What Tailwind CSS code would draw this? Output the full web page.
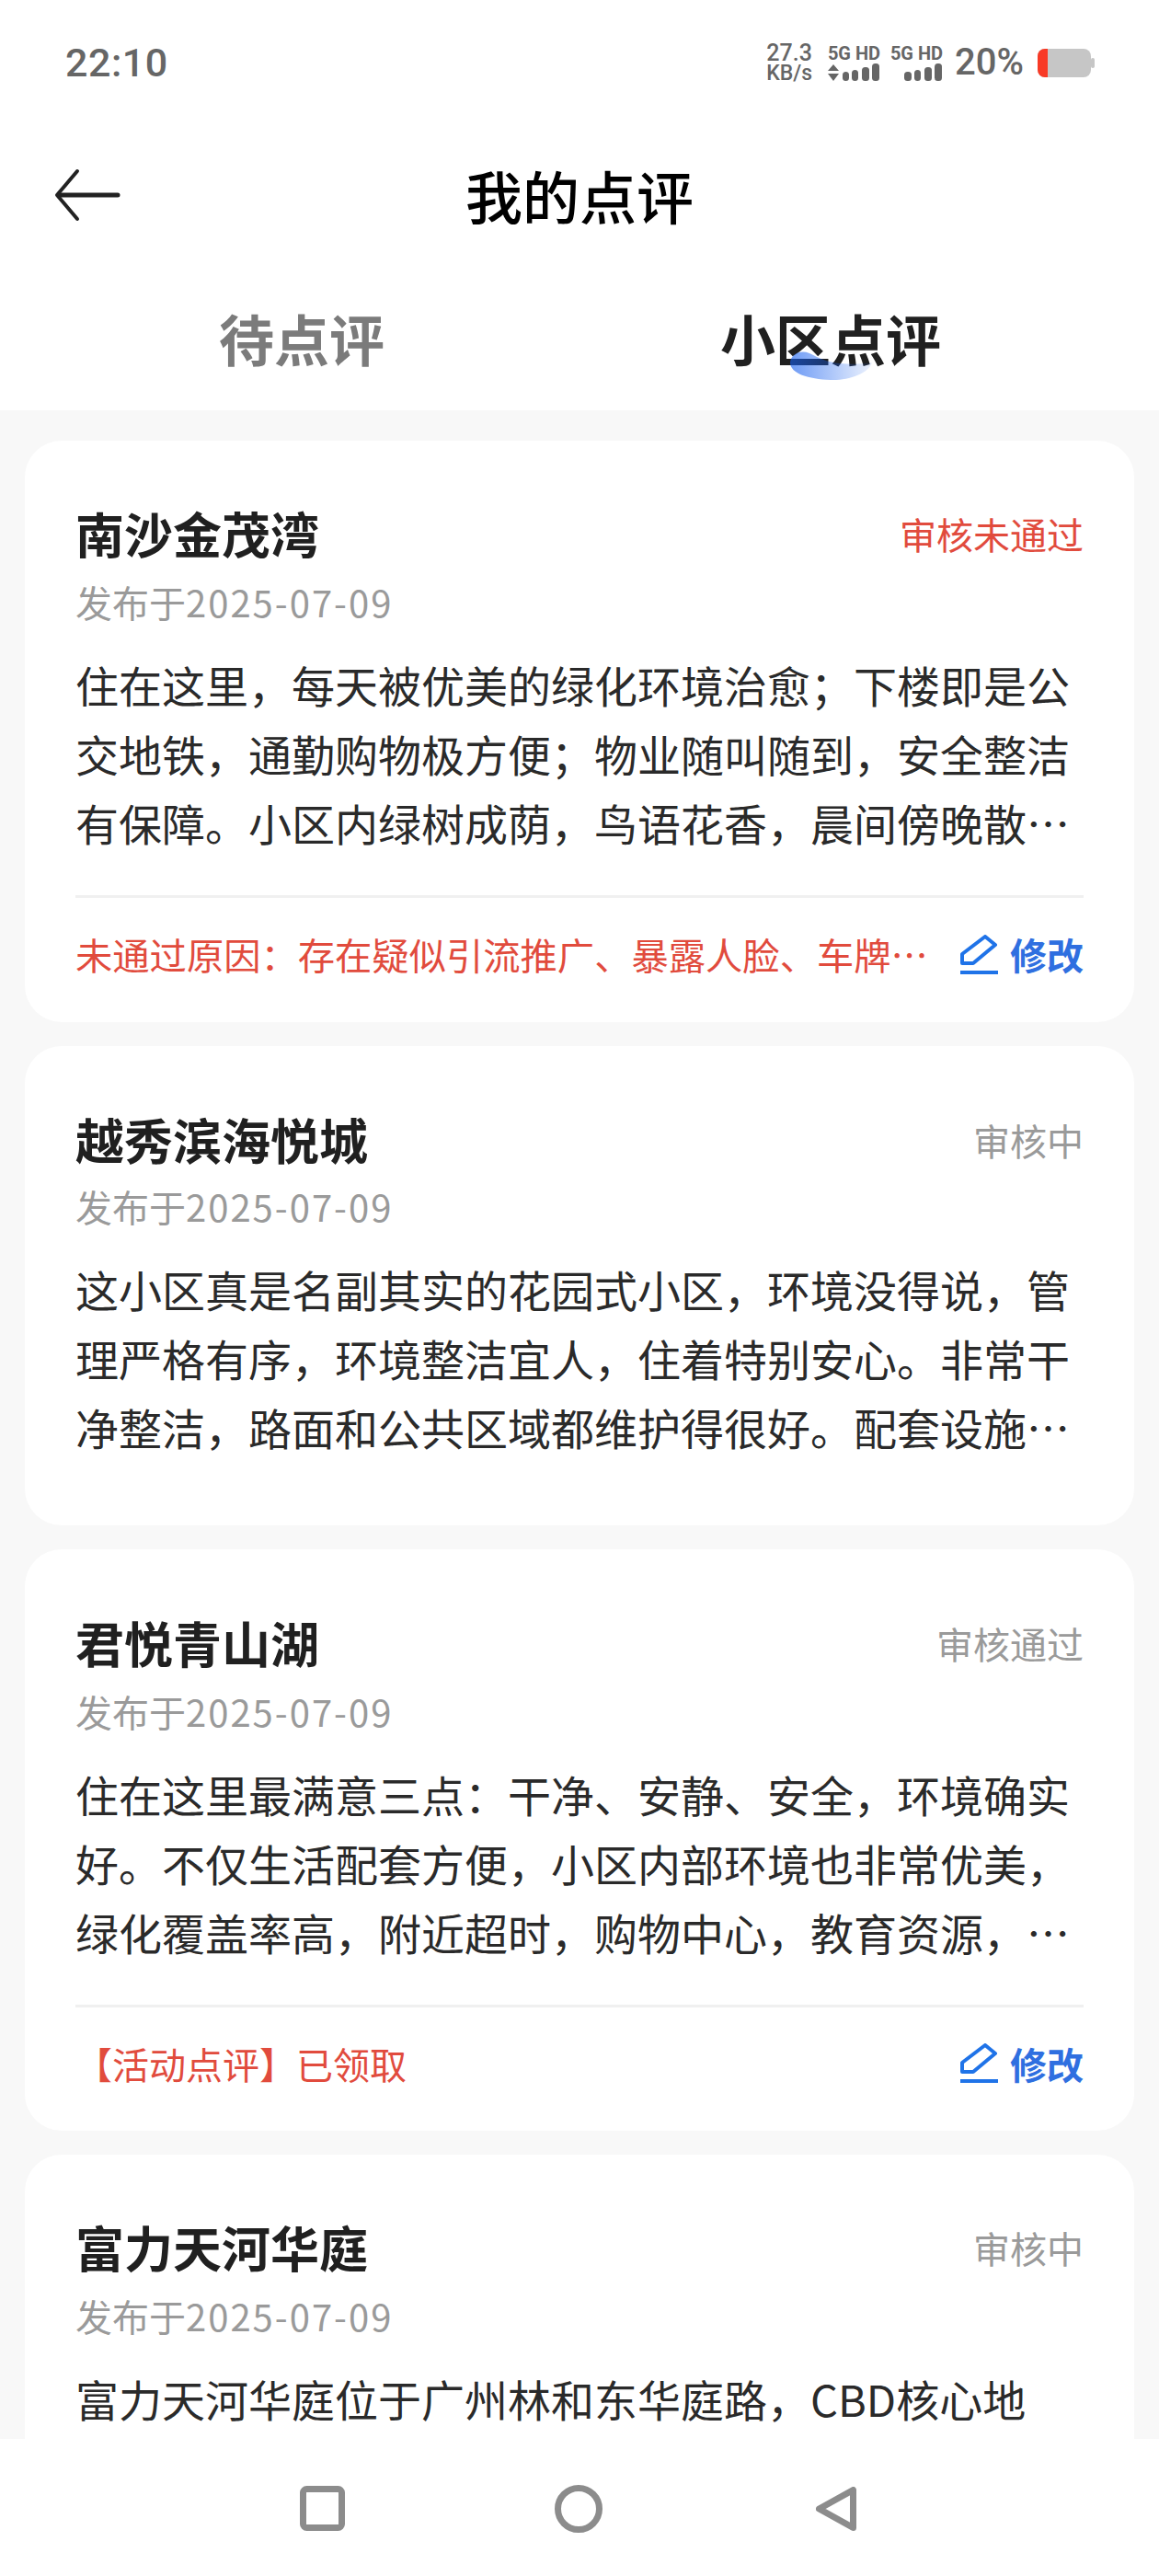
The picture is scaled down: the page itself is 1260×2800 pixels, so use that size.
<!DOCTYPE html>
<html lang="zh-CN">

<head>
    <meta charset="UTF-8">
    <meta name="viewport" content="width=device-width, initial-scale=1.0">
    <title>我的点评</title>
    <script src="https://cdn.jsdelivr.net/npm/@tailwindcss/browser@4"></script>
</head>

<body class="bg-white font-['Noto_Sans_CJK_SC','Noto_Sans',sans-serif]">
    <div class="w-[1260px] h-[2800px] flex flex-col overflow-hidden">
        <!-- status bar -->
        <div class="h-[136px] shrink-0 flex items-center justify-between pl-[71px] pr-[70px] text-[#666666] font-['Roboto',sans-serif]">
            <span class="text-[43px] font-medium tracking-[0.5px]">22:10</span>
            <div class="flex items-center">
                <div class="flex flex-col items-center w-[50px] mr-[17px] font-medium">
                    <span class="text-[25px] leading-[23px]">27.3</span>
                    <span class="text-[23px] leading-[21px]">KB/s</span>
                </div>
                <div class="flex flex-col items-end w-[57px] mr-[11px]">
                    <span class="text-[20px] leading-[21px] font-bold whitespace-nowrap">5G HD</span>
                    <svg width="57" height="20" viewBox="0 0 57 20" fill="#666666">
                        <path d="M0 8l6-7 6 7zM0 11h12l-6 8z" />
                        <rect x="16" y="9" width="7" height="10" rx="3.5" />
                        <rect x="26" y="7" width="7" height="12" rx="3.5" />
                        <rect x="37" y="4" width="8" height="15" rx="3.5" />
                        <rect x="48" y="0" width="8" height="19" rx="3.5" />
                    </svg>
                </div>
                <div class="flex flex-col items-end w-[57px] mr-[13px]">
                    <span class="text-[20px] leading-[21px] font-bold whitespace-nowrap">5G HD</span>
                    <svg width="57" height="20" viewBox="0 0 57 20" fill="#666666">
                        <rect x="15" y="9" width="8" height="10" rx="3.5" />
                        <rect x="26" y="7" width="7" height="12" rx="3.5" />
                        <rect x="37" y="4" width="8" height="15" rx="3.5" />
                        <rect x="48" y="0" width="8" height="19" rx="3.5" />
                    </svg>
                </div>
                <span class="text-[40px] font-medium mr-[15px]">20%</span>
                <svg width="62" height="31" viewBox="0 0 62 31">
                    <rect x="0" y="0" width="58" height="31" rx="8" fill="#c6c6c6" />
                    <path d="M8 0h3v31H8a8 8 0 0 1-8-8V8a8 8 0 0 1 8-8z" fill="#f83a26" />
                    <rect x="58" y="10" width="4" height="11" rx="2" fill="#c6c6c6" />
                </svg>
            </div>
        </div>

        <!-- title -->
        <div class="relative h-[156px] shrink-0 flex items-center justify-center pb-[4px]">
            <svg class="absolute left-[58px] top-[46px]" width="74" height="60" viewBox="0 0 74 60" fill="none" stroke="#222222" stroke-linecap="round" stroke-linejoin="round">
                <path d="M26 4L4 30l22 26" stroke-width="4" />
                <path d="M6 30h64" stroke-width="5" />
            </svg>
            <h1 class="text-[62px] font-medium text-black">我的点评</h1>
        </div>

        <!-- tabs -->
        <div class="h-[154px] shrink-0 grid grid-cols-2 pb-[4px] text-[60px] font-bold">
            <div class="flex items-center justify-center pl-[26px] text-[#7b7b7b]">待点评</div>
            <div class="flex items-center justify-center pr-[84px] text-[#202020]">
                <span class="relative">小区点评
                    <svg class="absolute left-[76px] top-[60px]" width="89" height="32" viewBox="0 0 89 32">
                        <defs>
                            <linearGradient id="tab-blob" x1="0" y1="0" x2="1" y2="0">
                                <stop offset="0" stop-color="#145def" stop-opacity="0.62" />
                                <stop offset="1" stop-color="#145def" stop-opacity="0.08" />
                            </linearGradient>
                        </defs>
                        <path d="M0 12C1 3 11-2 21 2c10 5 20 10 33 11 12 1 24 1 35-1C86 24 62 32 44 31 20 30 0 24 0 12z" fill="url(#tab-blob)" />
                    </svg>
                </span>
            </div>
        </div>

        <!-- list -->
        <div class="flex-1 overflow-hidden bg-[#f8f8f8] px-[27px] pt-[33px] flex flex-col gap-[26px]">
            <div class="bg-white rounded-[40px] px-[55px] pt-[66px] shrink-0">
                <div class="flex items-center justify-between h-[70px]">
                    <span class="text-[53px] font-bold text-[#202020]">南沙金茂湾</span>
                    <span class="text-[40px] text-[#e14b3d]">审核未通过</span>
                </div>
                <p class="text-[40px] leading-[56px] text-[#9a9a9a] mt-[11px]">发布于<span class="tracking-[2px]">2025-07-09</span></p>
                <p class="text-[47px] leading-[75px] text-[#2a2a2a] mt-[24px] line-clamp-3">住在这里，每天被优美的绿化环境治愈；下楼即是公交地铁，通勤购物极方便；物业随叫随到，安全整洁有保障。小区内绿树成荫，鸟语花香，晨间傍晚散步都很惬意，邻里之间也十分和睦友善。</p>
                <div class="mt-[42px] border-t-[3px] border-[#f0f0f0] h-[138px] flex items-center justify-between pb-[13px]">
                    <span class="text-[40.3px] text-[#e14b3d] w-[932px] truncate">未通过原因：存在疑似引流推广、暴露人脸、车牌号码等违规内容</span>
                    <span class="flex items-center text-[40px] font-bold text-[#2f6fe0]">
                        <svg class="mr-[12px]" width="42" height="43" viewBox="0 0 42 43" fill="none" stroke="#1f73e8" stroke-width="4" stroke-linejoin="round">
                            <path d="M27 2l11 9-24 20H2V21z" />
                            <path d="M0 41h41" />
                        </svg>修改</span>
                </div>
            </div>

            <div class="bg-white rounded-[40px] px-[55px] pt-[67px] h-[521px] shrink-0">
                <div class="flex items-center justify-between h-[70px]">
                    <span class="text-[53px] font-bold text-[#202020]">越秀滨海悦城</span>
                    <span class="text-[40px] text-[#9a9a9a]">审核中</span>
                </div>
                <p class="text-[40px] leading-[56px] text-[#9a9a9a] mt-[9px]">发布于<span class="tracking-[2px]">2025-07-09</span></p>
                <p class="text-[47px] leading-[75px] text-[#2a2a2a] mt-[24px] line-clamp-3">这小区真是名副其实的花园式小区，环境没得说，管理严格有序，环境整洁宜人，住着特别安心。非常干净整洁，路面和公共区域都维护得很好。配套设施也很齐全，生活非常方便，住起来很舒服。</p>
            </div>

            <div class="bg-white rounded-[40px] px-[55px] pt-[67px] shrink-0">
                <div class="flex items-center justify-between h-[70px]">
                    <span class="text-[53px] font-bold text-[#202020]">君悦青山湖</span>
                    <span class="text-[40px] text-[#9a9a9a]">审核通过</span>
                </div>
                <p class="text-[40px] leading-[56px] text-[#9a9a9a] mt-[11px]">发布于<span class="tracking-[2px]">2025-07-09</span></p>
                <p class="text-[47px] leading-[75px] text-[#2a2a2a] mt-[24px] line-clamp-3">住在这里最满意三点：干净、安静、安全，环境确实好。不仅生活配套方便，小区内部环境也非常优美，绿化覆盖率高，附近超时，购物中心，教育资源，一应俱全，出行也很便利，非常适合居住。</p>
                <div class="mt-[42px] border-t-[3px] border-[#f0f0f0] h-[137px] flex items-center justify-between pb-[13px]">
                    <span class="text-[40px] text-[#e14b3d]">【活动点评】已领取</span>
                    <span class="flex items-center text-[40px] font-bold text-[#2f6fe0]">
                        <svg class="mr-[12px]" width="42" height="43" viewBox="0 0 42 43" fill="none" stroke="#1f73e8" stroke-width="4" stroke-linejoin="round">
                            <path d="M27 2l11 9-24 20H2V21z" />
                            <path d="M0 41h41" />
                        </svg>修改</span>
                </div>
            </div>

            <div class="bg-white rounded-[40px] px-[55px] pt-[66px] shrink-0">
                <div class="flex items-center justify-between h-[70px]">
                    <span class="text-[53px] font-bold text-[#202020]">富力天河华庭</span>
                    <span class="text-[40px] text-[#9a9a9a]">审核中</span>
                </div>
                <p class="text-[40px] leading-[56px] text-[#9a9a9a] mt-[11px]">发布于<span class="tracking-[2px]">2025-07-09</span></p>
                <p class="text-[47px] leading-[75px] text-[#2a2a2a] mt-[24px] line-clamp-3">富力天河华庭位于广州林和东华庭路，CBD核心地段，交通便利，配套齐全，居住体验很好。</p>
            </div>
        </div>

        <!-- nav bar -->
        <div class="h-[149px] shrink-0 bg-white flex items-start pt-[50px] pl-[326px]">
            <svg class="mt-[1px]" width="49" height="49" viewBox="0 0 49 49" fill="none" stroke="#8c8c8c" stroke-width="7">
                <rect x="3.5" y="3.5" width="42" height="42" rx="4" />
            </svg>
            <svg class="ml-[228px]" width="52" height="52" viewBox="0 0 52 52" fill="none" stroke="#8c8c8c" stroke-width="7">
                <circle cx="26" cy="26" r="22.5" />
            </svg>
            <svg class="ml-[232px] mt-[2px]" width="44" height="48" viewBox="0 0 44 48" fill="none" stroke="#8c8c8c" stroke-width="7" stroke-linejoin="round">
                <path d="M40.5 3.5v41L3.5 24z" />
            </svg>
        </div>
    </div>
</body>

</html>
